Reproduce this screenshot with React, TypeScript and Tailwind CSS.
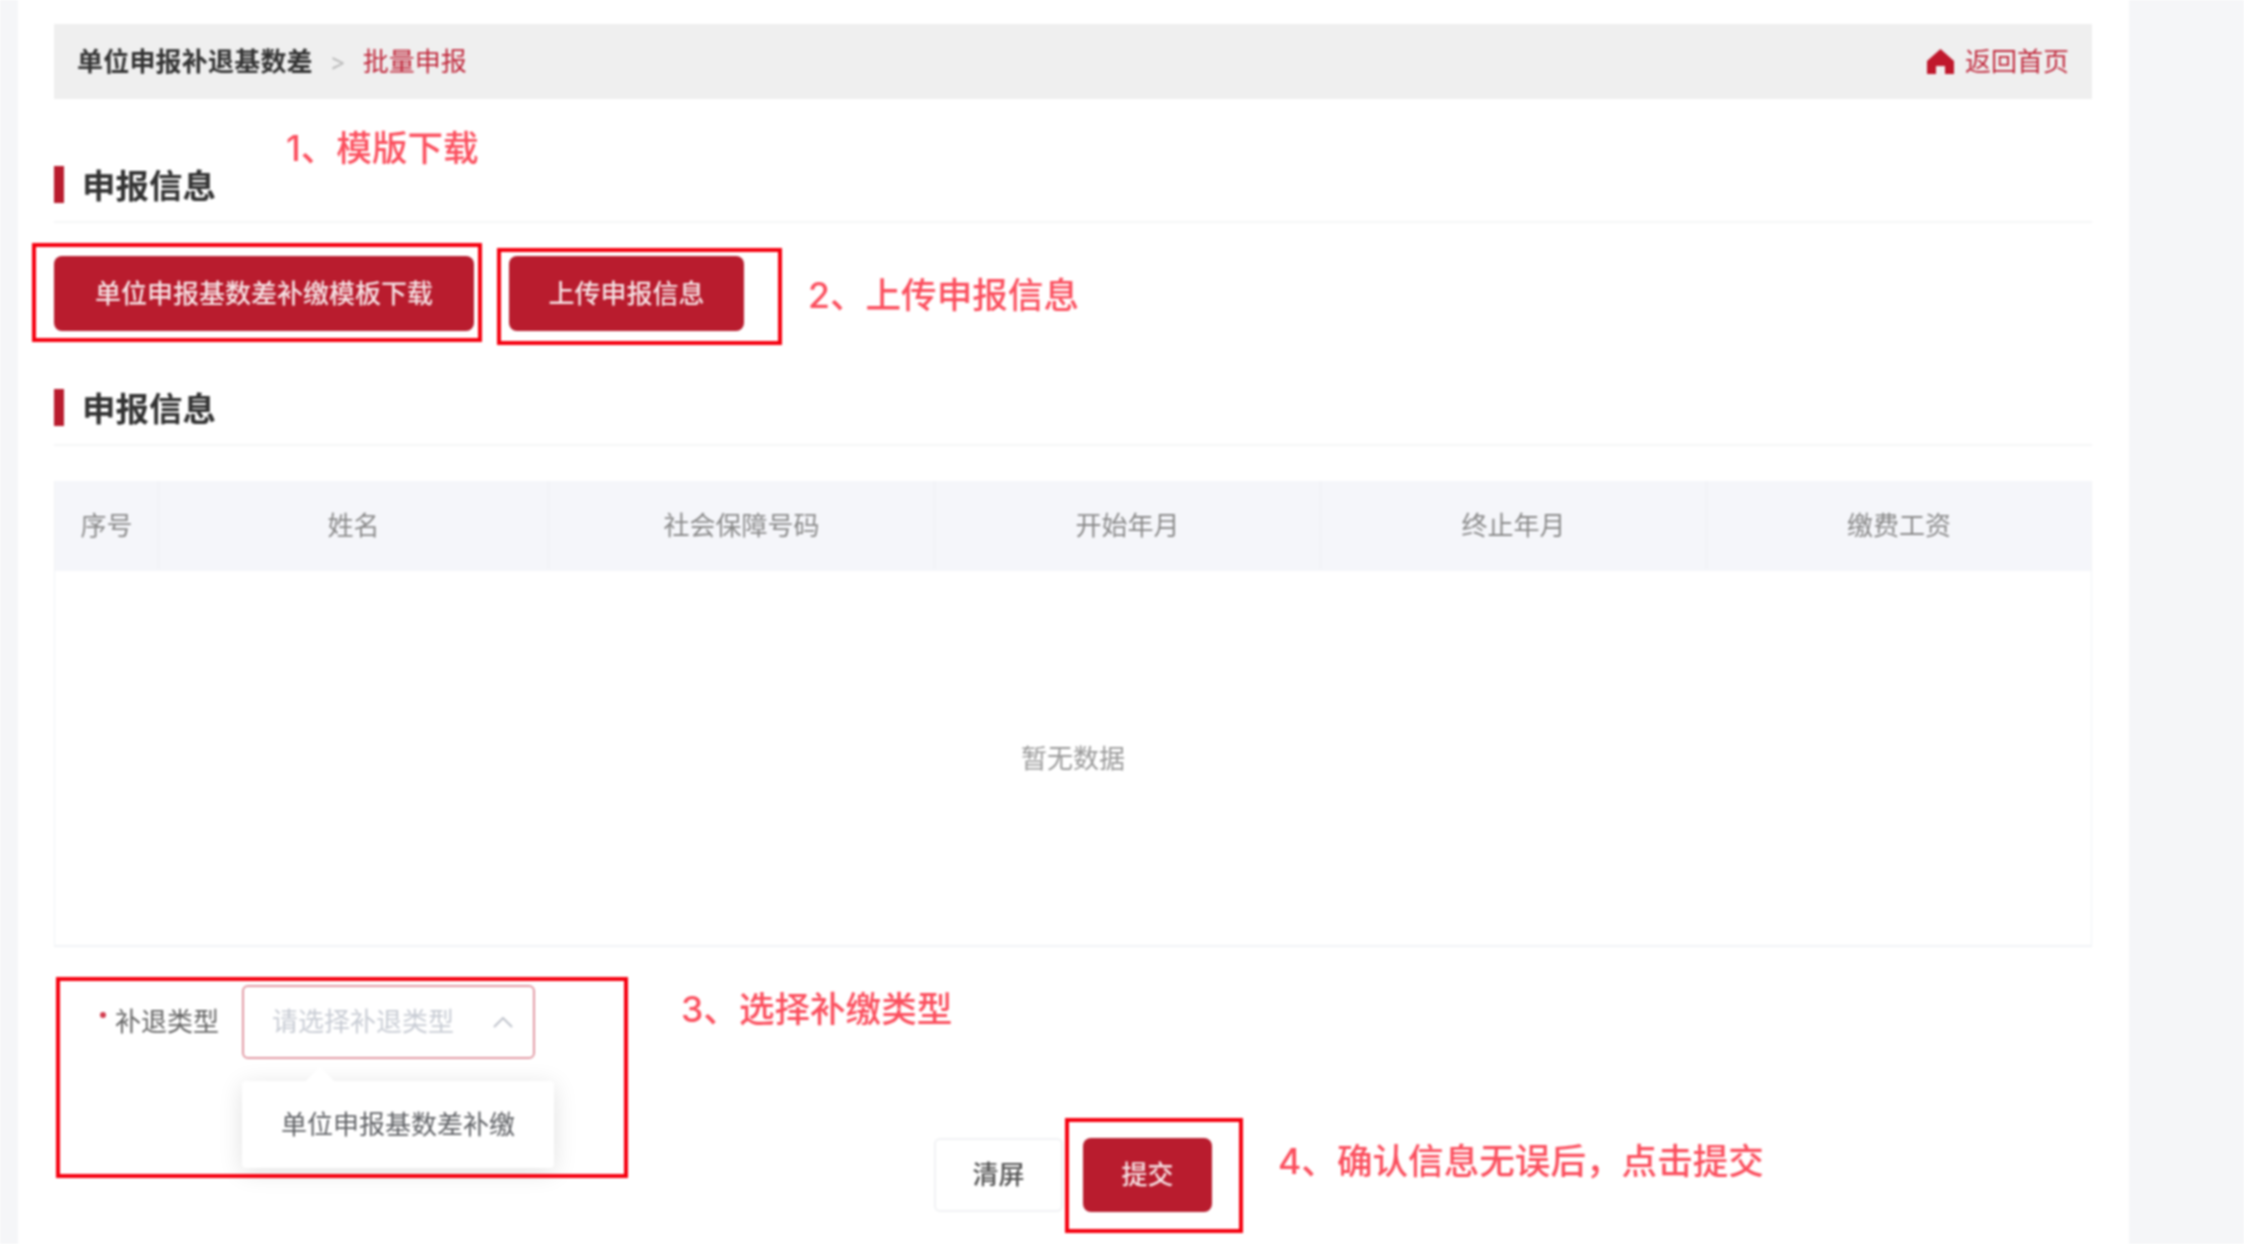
const FONT = "font-['Inter','Noto_Sans_CJK_SC',sans-serif]";

const columns = ["序号", "姓名", "社会保障号码", "开始年月", "终止年月", "缴费工资"];

// ─── Section heading with the red marker ──────────────────────────────────────

function SectionTitle({ children, className }: { children: React.ReactNode; className: string }) {
  return (
    <div className={`flex h-[37px] box-content items-center gap-[18px] border-b-2 border-[#f5f6f7] pb-[18px] ${className}`}>
      <span className="h-[37px] w-[10px] bg-[#b91c2e]" />
      <span className="pt-[4px] text-[33.5px] font-bold leading-[37px] text-[#333]">{children}</span>
    </div>
  );
}

function HomeIcon() {
  return (
    <svg viewBox="0 0 27 25" className="h-[25px] w-[27px]" aria-hidden="true">
      <path fill="#c0182c" fillRule="evenodd" d="M13.5 0 27 12V25H18V17H9V25H0V12Z" />
    </svg>
  );
}

// ─── Red markup drawn over the screenshot ─────────────────────────────────────

function Note({ className, children }: { className: string; children: React.ReactNode }) {
  return (
    <div className={`absolute whitespace-nowrap text-[35.6px] font-medium leading-[48px] text-[#fb4f5e] ${className}`}>
      {children}
    </div>
  );
}

function MarkBox({ className }: { className: string }) {
  return <div className={`pointer-events-none absolute border-[4px] border-[#f5000f] ${className}`} />;
}

export default function App() {
  return (
    <div className={`relative flex h-[1244px] w-[2244px] overflow-hidden bg-[#f5f6f8] blur-[0.8px] ${FONT}`}>
      <main className="ml-[18px] h-full w-[2111px] bg-white pl-[36px] pr-[37px] pt-[24px]">
        {/* Breadcrumb bar */}
        <div className="flex h-[75px] items-center justify-between bg-[#efefef] pl-[23px] pr-[23px] text-[26px]">
          <div className="flex items-center">
            <span className="font-bold tracking-[0.2px] text-[#333]">单位申报补退基数差</span>
            <span className="ml-[17px] mr-[17px] text-[24px] text-[#bbb]">&gt;</span>
            <span className="text-[#c0283c]">批量申报</span>
          </div>
          <div className="flex items-center gap-[11px] text-[#c0283c]">
            <HomeIcon />
            <span>返回首页</span>
          </div>
        </div>

        <SectionTitle className="mt-[67px]">申报信息</SectionTitle>

        <div className="mt-[33px] flex gap-[35px]">
          <button className="h-[75px] w-[420px] rounded-[8px] bg-[#b91c2e] text-[26px] font-medium text-[#f6e3e5]">
            单位申报基数差补缴模板下载
          </button>
          <button className="h-[75px] w-[235px] rounded-[8px] bg-[#b91c2e] text-[26px] font-medium text-[#f6e3e5]">
            上传申报信息
          </button>
        </div>

        <SectionTitle className="mt-[58px]">申报信息</SectionTitle>

        {/* Empty table */}
        <div className="mt-[35px] h-[466px] border-b-2 border-x border-[#f1f3f6]">
          <div className="grid h-[90px] grid-cols-[103px_390px_386px_386px_386px_1fr] bg-[#f5f6fa] pb-[2px] text-[26px] text-[#8a8a8a]">
            {columns.map((c, i) => (
              <div key={c} className={`flex items-center justify-center ${i > 0 ? "border-l border-[#eef0f4]" : ""}`}>
                {c}
              </div>
            ))}
          </div>
          <div className="flex h-[374px] items-center justify-center pt-[1px] text-[26px] text-[#999]">
            暂无数据
          </div>
        </div>

        {/* Type select with its open dropdown */}
        <div className="mt-[38px] flex items-center pl-[46px]">
          <span className="mb-[14px] h-[6px] w-[6px] rounded-full bg-[#d23c4e]" />
          <span className="mb-[2px] ml-[9px] text-[26px] text-[#666]">补退类型</span>
          <div className="relative ml-[23px] flex h-[74px] w-[293px] items-center justify-between rounded-[6px] border-2 border-[#e29aa4] pl-[28px] pr-[20px]">
            <span className="mb-[1px] text-[26px] text-[#c8ccd4]">请选择补退类型</span>
            <svg viewBox="0 0 20 11" className="h-[11px] w-[20px]" fill="none" stroke="#c0c4cc" strokeWidth="2" aria-hidden="true">
              <path d="M1 10 10 1l9 9" />
            </svg>
            <div className="absolute left-[-2px] top-[94px] flex h-[87px] w-[312px] items-center justify-center rounded-[4px] bg-white text-[26px] text-[#606266] shadow-[0_4px_24px_rgba(0,0,0,0.12)]">
              <span className="absolute left-[68px] top-[-10px] h-[20px] w-[20px] rotate-45 bg-white" />
              <span className="relative">单位申报基数差补缴</span>
            </div>
          </div>
        </div>

        {/* Form actions */}
        <div className="mt-[79px] flex justify-center gap-[20px]">
          <button className="h-[74px] w-[129px] rounded-[6px] border-2 border-[#f1f2f4] bg-white pb-[2px] text-[26px] font-medium text-[#555]">
            清屏
          </button>
          <button className="h-[74px] w-[129px] rounded-[8px] bg-[#b91c2e] pb-[2px] text-[26px] font-medium text-[#f6e3e5]">
            提交
          </button>
        </div>
      </main>

      <Note className="left-[286px] top-[125px]">1、模版下载</Note>
      <MarkBox className="left-[32px] top-[243px] h-[99px] w-[450px]" />
      <MarkBox className="left-[497px] top-[248px] h-[97px] w-[285px]" />
      <Note className="left-[808px] top-[272px]">2、上传申报信息</Note>
      <MarkBox className="left-[56px] top-[977px] h-[201px] w-[572px]" />
      <Note className="left-[681px] top-[986px]">3、选择补缴类型</Note>
      <MarkBox className="left-[1065px] top-[1118px] h-[115px] w-[178px]" />
      <Note className="left-[1278px] top-[1138px]">4、确认信息无误后，点击提交</Note>
    </div>
  );
}
